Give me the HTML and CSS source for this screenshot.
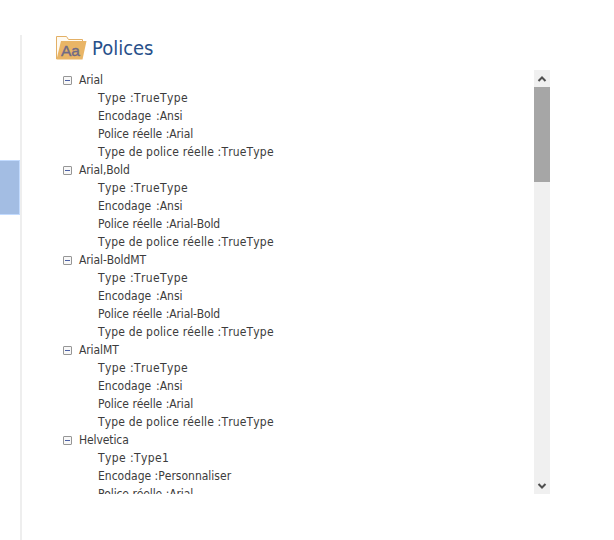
FILE: index.html
```
<!DOCTYPE html>
<html lang="fr">
<head>
    <meta charset="UTF-8">
    <title>Polices</title>
    <link rel="stylesheet" href="styles.css">
</head>
<body>
    <div id="side_menu"><div class="menu_active"></div></div>

    <div id="fonts_box">
        <div class="header_row">
            <svg class="folder" width="31" height="24" viewBox="0 0 31 24">
                <path d="M.5 23V.5h10l2 3h14V6" fill="#fffaf0" stroke="#e3b066"/>
                <path d="M.5 23.5L5 5h25.500L26.500 23.500z" fill="#e9b566"/>
                <text x="5" y="20">Aa</text>
            </svg>
            <h1>Polices</h1>
        </div>

        <div class="list_row">
            <ul class="tree">
                <li><span class="name">Arial</span>
                    <ul>
                        <li class="type">Type :TrueType</li>
                        <li class="encoding">Encodage :Ansi</li>
                        <li class="font">Police réelle :Arial</li>
                        <li class="font_type">Type de police réelle :TrueType</li>
                    </ul>
                </li>
                <li><span class="name">Arial,Bold</span>
                    <ul>
                        <li class="type">Type :TrueType</li>
                        <li class="encoding">Encodage :Ansi</li>
                        <li class="font">Police réelle :Arial-Bold</li>
                        <li class="font_type">Type de police réelle :TrueType</li>
                    </ul>
                </li>
                <li><span class="name">Arial-BoldMT</span>
                    <ul>
                        <li class="type">Type :TrueType</li>
                        <li class="encoding">Encodage :Ansi</li>
                        <li class="font">Police réelle :Arial-Bold</li>
                        <li class="font_type">Type de police réelle :TrueType</li>
                    </ul>
                </li>
                <li><span class="name">ArialMT</span>
                    <ul>
                        <li class="type">Type :TrueType</li>
                        <li class="encoding">Encodage :Ansi</li>
                        <li class="font">Police réelle :Arial</li>
                        <li class="font_type">Type de police réelle :TrueType</li>
                    </ul>
                </li>
                <li><span class="name">Helvetica</span>
                    <ul>
                        <li class="type">Type :Type1</li>
                        <li>Encodage :Personnaliser</li>
                        <li class="font">Police réelle :Arial</li>
                    </ul>
                </li>
            </ul>

            <!-- scrollbar -->
            <div class="scrollbar">
                <svg class="arrow" width="16" height="17" viewBox="0 0 16 17"><path d="M4.500 11L8 7.500l3.500 3.500"/></svg>
                <div class="thumb"></div>
                <svg class="arrow arrow_down" width="16" height="17" viewBox="0 0 16 17"><path d="M4.500 7L8 10.500l3.500-3.500"/></svg>
            </div>
        </div>
    </div>
</body>
</html>
```
FILE: styles.css
```
* {padding:0;margin:0;box-sizing:border-box;}
body {
    width:614px;height:540px;overflow:hidden;
    display:flex;
    background:#fff;color:#3c3c3c;
    font-family:"DejaVu Sans Condensed", "DejaVu Sans", sans-serif;
    font-stretch:condensed;
}
ul {list-style:none;}

/* left menu, only its edge is visible */
#side_menu {width:22px;height:505px;margin-top:35px;padding-top:125px;border-right:2px solid #eee;}
.menu_active {height:55px;background:#a3bde3;border:1px solid #c2dbff;border-left:0;}

#fonts_box {width:494px;margin-left:34px;padding-top:35px;}
.header_row {display:flex;align-items:center;height:25px;}
.folder {display:block;}
.folder text {font:15.5px "Liberation Sans", sans-serif;fill:#6f6a85;stroke:#6f6a85;stroke-width:.4px;}
h1 {margin-left:5px;padding-top:2px;font-size:20px;font-weight:400;line-height:25px;color:#28508a;}

.list_row {display:flex;justify-content:space-between;height:424px;margin-top:10px;overflow:hidden;}
.tree {padding:1px 0 0 7px;font-size:12px;line-height:18px;white-space:nowrap;font-kerning:none;}
.tree ul {padding-left:35px;}
.tree .type {letter-spacing:.4px;}
.tree .encoding {word-spacing:1.500px;}
.tree .font {letter-spacing:-.15px;word-spacing:.5px;}
.tree .font_type {letter-spacing:.16px;}
.name {display:flex;align-items:center;height:18px;letter-spacing:-.1px;}
/* collapse button */
.name::before {
    content:"";width:9px;height:9px;margin-right:7px;
    box-sizing:border-box;border:1px solid #969696;border-radius:1px;
    background:linear-gradient(#4a5fa5,#4a5fa5) center/5px 1px no-repeat #f7f7f7;
}

.scrollbar {display:flex;flex-direction:column;width:16px;height:424px;background:#f0f0f0;}
.thumb {height:95px;background:#a6a6a6;}
.arrow {display:block;fill:none;stroke:#505050;stroke-width:2;}
.arrow_down {margin-top:auto;}
```
